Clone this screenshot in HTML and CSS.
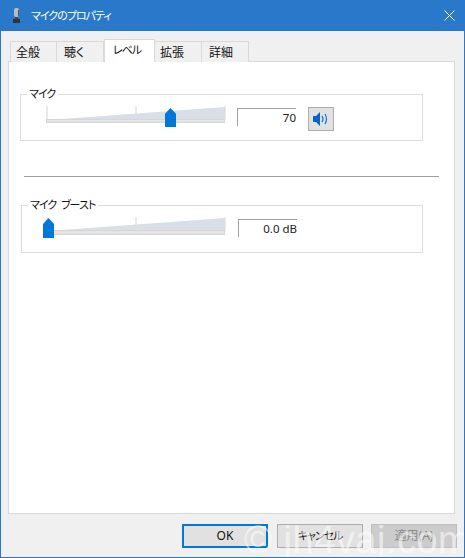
FILE: index.html
```html
<!DOCTYPE html>
<html lang="ja">
<head>
	<meta charset="UTF-8">
	<title>マイクのプロパティ</title>
	<link rel="stylesheet" href="styles.css">
</head>
<body>
	<div class="window">
		<div class="titleBar">
			<svg class="micIcon" width="7" height="15" viewBox="0 0 7 15">
				<rect x="1" y="0" width="5" height="9" rx="2" fill="#b9bcbf"/>
				<rect x="2" y="9" width="3" height="2" fill="#444"/>
				<rect x="0" y="11" width="7" height="4" fill="#333"/>
				<rect x="5" y="2" width="1" height="6" fill="#555"/>
			</svg>
			<span class="titleText kana">マイクのプロパティ</span>
			<svg class="closeIcon" width="11" height="11" viewBox="0 0 11 11">
				<path d="M0.5 0.5L10.5 10.5M10.5 0.5L0.5 10.5" stroke="#fff" stroke-width="1"/>
			</svg>
		</div>
		<div class="client">
			<ul class="tabs">
				<li>全般</li>
				<li>聴く</li>
				<li class="active kana">レベル</li>
				<li>拡張</li>
				<li>詳細</li>
			</ul>
			<div class="panel">
				<fieldset class="group groupMic">
					<legend class="kana">マイク</legend>
					<div class="slider">
						<svg width="181" height="27" viewBox="0 0 181 27">
							<path d="M1 0V14M90 0V14M179 0V14" stroke="#d4d4d4"/>
							<path d="M2 14L179 1V13H2Z" fill="#d8dfe6"/>
							<rect x="0.5" y="13.5" width="178" height="3" fill="#e4e4e4" stroke="#d6d6d6"/>
						</svg>
						<span class="thumb thumbMic"></span>
					</div>
					<div class="valueBox">70</div>
					<button class="muteBtn">
						<svg width="16" height="14" viewBox="0 0 16 14">
							<path d="M0 4H3L7 0V14L3 10H0Z" fill="#0a64c8"/>
							<path d="M9 4Q11 7 9 10M12 2Q15 7 12 12" fill="none" stroke="#0a78e0" stroke-width="1.2"/>
						</svg>
					</button>
				</fieldset>
				<div class="divider"></div>
				<fieldset class="group groupBoost">
					<legend class="kana">マイク ブースト</legend>
					<div class="slider">
						<svg width="181" height="27" viewBox="0 0 181 27">
							<path d="M1 0V14M90 0V14M179 0V14" stroke="#d4d4d4"/>
							<path d="M2 14L179 1V13H2Z" fill="#d8dfe6"/>
							<rect x="0.5" y="13.5" width="178" height="4" fill="#e4e4e4" stroke="#d6d6d6"/>
						</svg>
						<span class="thumb thumbBoost"></span>
					</div>
					<div class="valueBox">0.0 dB</div>
				</fieldset>
			</div>
			<div class="buttons">
				<button class="btn btnDefault">OK</button>
				<button class="btn"><span class="kana">キャンセル</span></button>
				<button class="btn btnOff">適用(A)</button>
			</div>
		</div>
		<div class="watermark">© jh4vaj.com</div>
	</div>
</body>
</html>
```

FILE: styles.css
```css
html,
body {
	margin: 0;
	height: 100%;
}
body {
	font: 12px/16px "Noto Sans", "Noto Sans CJK JP", sans-serif;
	font-feature-settings: "palt";
	color: #111;
}
ul {
	list-style: none;
	margin: 0;
	padding: 0;
}
.kana {
	font-size: 11px;
	letter-spacing: -1px;
	word-spacing: 3px;
}
.window {
	position: relative;
	display: flex;
	flex-direction: column;
	height: 100%;
	box-sizing: border-box;
	border: 1px solid #2a78c9;
	border-top: none;
	overflow: hidden;
	background: #f0f0f0;
}
.titleBar {
	display: flex;
	align-items: center;
	height: 31px;
	margin: 0 -1px;
	padding: 0 10px 0 13px;
	background: #2a78c9;
	color: #fff;
}
.micIcon {
	margin-right: 11px;
}
.titleText {
	flex: 1;
}
.client {
	flex: 1;
	display: flex;
	flex-direction: column;
	padding: 8px 9px 9px 7px;
}
.tabs {
	display: flex;
	height: 22px;
	padding-left: 2px;
	align-items: flex-end;
	position: relative;
	top: 1px;
}
.tabs li {
	width: 39px;
	height: 20px;
	line-height: 22px;
	padding-left: 7px;
	border: 1px solid #d9d9d9;
	border-left: none;
	border-bottom: none;
	background: #f0f0f0;
}
.tabs li:first-child {
	border-left: 1px solid #d9d9d9;
	width: 40px;
	padding-left: 5px;
}
.tabs li.active {
	width: 41px;
	height: 22px;
	line-height: 20px;
	padding-left: 8px;
	background: #fff;
	border-left: 1px solid #d9d9d9;
	position: relative;
	z-index: 1;
}
.tabs li.active + li {
	width: 41px;
	padding-left: 5px;
}
.panel {
	flex: 1;
	background: #fff;
	border: 1px solid #d9d9d9;
	padding: 25px 31px 0 11px;
}
.group {
	display: flex;
	align-items: flex-start;
	margin: 0;
	height: 54px;
	box-sizing: border-box;
	border: 1px solid #dcdcdc;
	padding: 0;
	min-width: 0;
}
.group legend {
	margin-left: 6px;
	padding: 0 3px 0 2px;
	line-height: 14px;
}
.groupBoost {
	height: 55px;
	margin-left: 1px;
}
.slider {
	position: relative;
	width: 181px;
	height: 27px;
	margin: 5px 0 0 25px;
}
.groupBoost .slider {
	margin-left: 24px;
}
.slider svg {
	display: block;
}
.thumb {
	position: absolute;
	top: 2px;
	width: 11px;
	height: 19px;
	background: #0078d7;
	clip-path: polygon(50% 0, 100% 30%, 100% 100%, 0 100%, 0 30%);
}
.thumbMic {
	left: 119px;
}
.thumbBoost {
	left: -3px;
	top: 1px;
	height: 20px;
}
.valueBox {
	width: 59px;
	height: 18px;
	line-height: 18px;
	margin: 7px 0 0 10px;
	box-sizing: border-box;
	border-top: 1px solid #a0a0a0;
	border-left: 1px solid #a0a0a0;
	text-align: right;
	font-size: 11.5px;
	color: #222;
}
.groupBoost .valueBox {
	margin: 7px 0 0 11px;
}
.muteBtn {
	width: 26px;
	height: 24px;
	margin: 6px 0 0 12px;
	padding: 0;
	display: flex;
	align-items: center;
	justify-content: center;
	background: #e1e1e1;
	border: 1px solid #adadad;
}
.divider {
	height: 1px;
	margin: 35px -16px 21px 4px;
	background: #a0a0a0;
}
.buttons {
	display: flex;
	justify-content: flex-end;
	gap: 8px;
	margin: 10px -2px 0 0;
}
.btn {
	width: 86px;
	height: 24px;
	padding: 0;
	font: inherit;
	color: #111;
	background: #e1e1e1;
	border: 1px solid #adadad;
}
.btnDefault {
	margin-right: 1px;
	border: 2px solid #0078d7;
}
.btnOff {
	color: #8a8a8a;
	background: #ccc;
	border-color: #bfbfbf;
}
.watermark {
	position: absolute;
	left: 243px;
	bottom: -5px;
	font: 38px/44px "Liberation Sans", sans-serif;
	letter-spacing: 0.5px;
	white-space: nowrap;
	color: rgba(255, 255, 255, 0.55);
}
```
